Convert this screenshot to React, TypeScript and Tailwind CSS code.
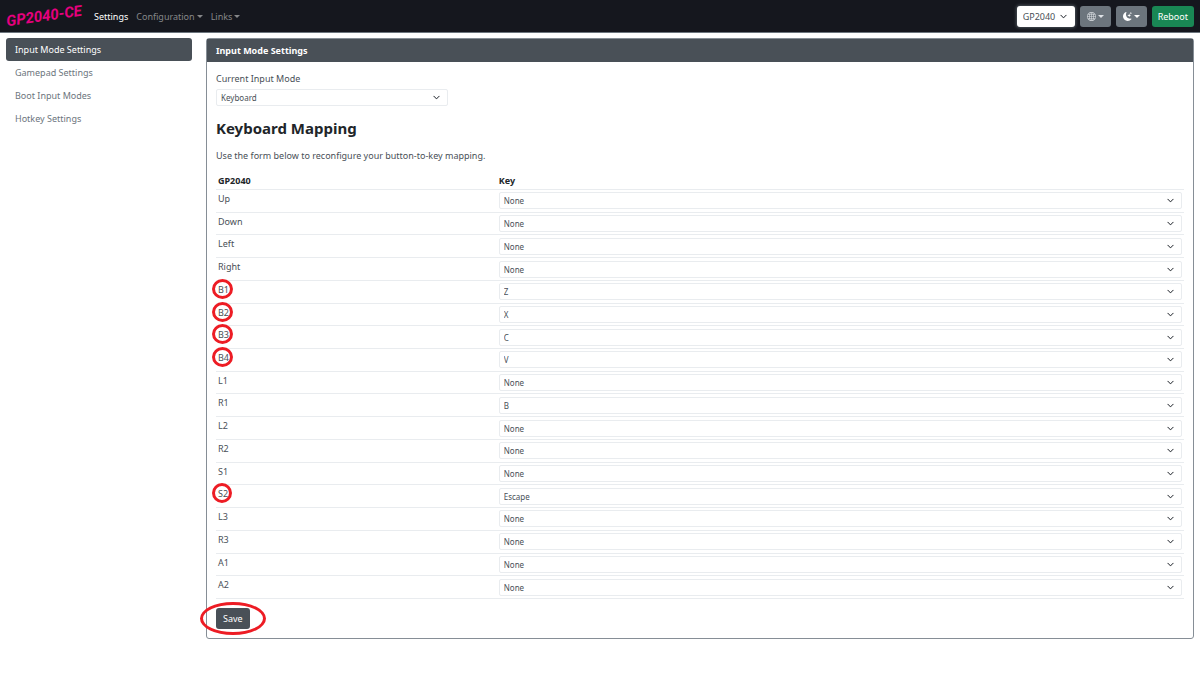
import React from 'react'
import { BsChevronDown, BsGlobe, BsMoonStarsFill } from 'react-icons/bs'

const sidebarItems = ['Input Mode Settings', 'Gamepad Settings', 'Boot Input Modes', 'Hotkey Settings']

const keyOptions = ['None', 'Z', 'X', 'C', 'V', 'B', 'Escape']

const mappings = [
    { button: 'Up', value: 'None' },
    { button: 'Down', value: 'None' },
    { button: 'Left', value: 'None' },
    { button: 'Right', value: 'None' },
    { button: 'B1', value: 'Z', marked: true },
    { button: 'B2', value: 'X', marked: true },
    { button: 'B3', value: 'C', marked: true },
    { button: 'B4', value: 'V', marked: true },
    { button: 'L1', value: 'None' },
    { button: 'R1', value: 'B' },
    { button: 'L2', value: 'None' },
    { button: 'R2', value: 'None' },
    { button: 'S1', value: 'None' },
    { button: 'S2', value: 'Escape', marked: true },
    { button: 'L3', value: 'None' },
    { button: 'R3', value: 'None' },
    { button: 'A1', value: 'None' },
    { button: 'A2', value: 'None' },
]

function Caret() {
    return <span className="border-x-3 border-t-3 border-x-transparent border-t-current" />
}

function FormSelect({ id, value, options }: { id: string; value: string; options: string[] }) {
    return (
        <div className="relative">
            <select
                id={id}
                defaultValue={value}
                className="block h-[17px] w-full appearance-none rounded-[2px] border border-[#e9ecef] bg-white pl-1 text-[8px] leading-[15px] text-[#495057]"
            >
                {options.map((option) => (
                    <option key={option}>{option}</option>
                ))}
            </select>
            <BsChevronDown className="pointer-events-none absolute top-[5px] right-2 size-[7px] text-[#343a40]" strokeWidth={1} />
        </div>
    )
}

function Navbar() {
    return (
        <nav className="flex h-[33px] items-center border-b border-[#6c757d] bg-[#15171e] px-[6px] text-[#868789]">
            <a href="#" className="w-[75px] -rotate-8 text-[15px] leading-[20px] font-bold italic whitespace-nowrap text-[#e6007e] font-['Roboto',sans-serif]">
                GP2040-CE
            </a>
            <div className="ml-[13px] flex items-center gap-2">
                <a href="#" className="text-white">Settings</a>
                <button className="flex items-center gap-[2px]">Configuration <Caret /></button>
                <button className="flex items-center gap-[2px]">Links <Caret /></button>
            </div>
            <div className="ml-auto flex items-center gap-[5px]">
                <div className="relative">
                    <select
                        aria-label="Button labels"
                        defaultValue="GP2040"
                        className="block h-[21px] w-[58px] appearance-none rounded-[3px] bg-white pl-[6px] text-[#495057] shadow-[0_0_3px_1px_#495057]"
                    >
                        <option>GP2040</option>
                    </select>
                    <BsChevronDown className="pointer-events-none absolute top-[7px] right-2 size-[7px] text-[#343a40]" strokeWidth={1} />
                </div>
                <button aria-label="Language" className="flex h-[21px] w-[31px] items-center justify-center gap-[2px] rounded-[3px] bg-[#6c757d] text-[#dee2e6]">
                    <BsGlobe className="size-[9px]" />
                    <Caret />
                </button>
                <button aria-label="Theme" className="flex h-[21px] w-[31px] items-center justify-center gap-[2px] rounded-[3px] bg-[#6c757d] text-white">
                    <BsMoonStarsFill className="size-[9px]" />
                    <Caret />
                </button>
                <button className="h-[21px] rounded-[3px] bg-[#198754] px-[6px] text-white">Reboot</button>
            </div>
        </nav>
    )
}

export default function App() {
    return (
        <div className="min-h-screen bg-white text-[9px] leading-[13px] text-[#495057] font-['Noto_Sans',sans-serif]">
            <Navbar />
            <div className="flex items-start pt-[5px]">
                <aside className="flex w-1/6 flex-col pr-2 pl-[6px]">
                    {sidebarItems.map((item, i) => (
                        <a
                            key={item}
                            href="#"
                            className={i === 0
                                ? 'rounded-[3px] bg-[#495057] px-[9px] py-[5px] text-white'
                                : 'rounded-[3px] px-[9px] py-[5px] text-[#6c757d]'}
                        >
                            {item}
                        </a>
                    ))}
                </aside>

                <main className="min-w-0 flex-1 px-[6px]">
                    <section className="rounded-[3px] border border-[#868e96]">
                        <h2 className="bg-[#495057] px-[9px] py-[5px] font-bold text-white">Input Mode Settings</h2>
                        <form className="px-[9px] pt-[10px] pb-[9px]">
                            <label htmlFor="input-mode" className="block">Current Input Mode</label>
                            <div className="mt-1 w-6/25">
                                <FormSelect id="input-mode" value="Keyboard" options={['Keyboard', 'XInput', 'Nintendo Switch']} />
                            </div>

                            <h1 className="mt-3 text-[15px] leading-[20px] font-bold text-[#212529]">Keyboard Mapping</h1>
                            <p className="mt-[11px]">Use the form below to reconfigure your button-to-key mapping.</p>

                            <table className="mt-[10px] h-[427px] w-full">
                                <thead>
                                    <tr className="border-b border-[#e9ecef] text-left text-[#212529]">
                                        <th className="w-[29%] px-[2px] py-[2px]">GP2040</th>
                                        <th className="px-[2px] py-[2px]">Key</th>
                                    </tr>
                                </thead>
                                <tbody>
                                    {mappings.map(({ button, value, marked }) => (
                                        <tr key={button} className="border-b border-[#e9ecef]">
                                            <td className="px-[2px] py-[2px] align-top">
                                                <label htmlFor={button} className="relative block w-fit">
                                                    {button}
                                                    {/* Hand drawn ring around the buttons to change */}
                                                    {marked && (
                                                        <span className="absolute -top-[4px] -right-[4px] -bottom-[3px] -left-[6px] rounded-[50%] border-3 border-[#ed1c24]" />
                                                    )}
                                                </label>
                                            </td>
                                            <td className="px-[2px] py-[2px]">
                                                <FormSelect id={button} value={value} options={keyOptions} />
                                            </td>
                                        </tr>
                                    ))}
                                </tbody>
                            </table>

                            <button type="button" className="relative mt-[9px] h-[21px] rounded-[3px] bg-[#495057] px-[7px] text-white">
                                Save
                                <span className="absolute -inset-x-4 -inset-y-[6px] rounded-[50%] border-3 border-[#ed1c24]" />
                            </button>
                        </form>
                    </section>
                </main>
            </div>
        </div>
    )
}
